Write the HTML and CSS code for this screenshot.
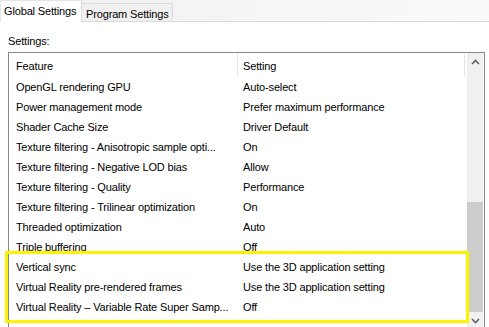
FILE: index.html
```html
<!DOCTYPE html>
<html>
<head>
    <title>Global Settings</title>
    <meta charset="UTF-8">
    <link rel="stylesheet" href="styles.css">
</head>
<body>
    <div class="tabs">
        <div class="tab active">Global Settings</div>
        <div class="tab">Program Settings</div>
        <div class="tab-fill"></div>
    </div>

    <div class="panel">
        <div class="label">Settings:</div>

        <div class="listbox">
            <div class="list">
                <div class="row head">
                    <div class="col feature">Feature</div>
                    <div class="col setting">Setting</div>
                </div>
                <div class="row"><div class="col feature">OpenGL rendering GPU</div><div class="col setting">Auto-select</div></div>
                <div class="row"><div class="col feature">Power management mode</div><div class="col setting">Prefer maximum performance</div></div>
                <div class="row"><div class="col feature">Shader Cache Size</div><div class="col setting">Driver Default</div></div>
                <div class="row"><div class="col feature">Texture filtering - Anisotropic sample opti...</div><div class="col setting">On</div></div>
                <div class="row"><div class="col feature">Texture filtering - Negative LOD bias</div><div class="col setting">Allow</div></div>
                <div class="row"><div class="col feature">Texture filtering - Quality</div><div class="col setting">Performance</div></div>
                <div class="row"><div class="col feature">Texture filtering - Trilinear optimization</div><div class="col setting">On</div></div>
                <div class="row"><div class="col feature">Threaded optimization</div><div class="col setting">Auto</div></div>
                <div class="row"><div class="col feature">Triple buffering</div><div class="col setting">Off</div></div>
                <div class="row"><div class="col feature">Vertical sync</div><div class="col setting">Use the 3D application setting</div></div>
                <div class="row"><div class="col feature">Virtual Reality pre-rendered frames</div><div class="col setting">Use the 3D application setting</div></div>
                <div class="row"><div class="col feature">Virtual Reality – Variable Rate Super Samp...</div><div class="col setting">Off</div></div>
            </div>

            <div class="scrollbar">
                <div class="arrow">
                    <svg width="9" height="6" viewBox="0 0 9 6"><path d="M1 5 L4.5 1.5 L8 5" fill="none" stroke="#606060" stroke-width="1.6"/></svg>
                </div>
                <div class="track">
                    <div class="thumb"></div>
                </div>
                <div class="arrow">
                    <svg width="9" height="6" viewBox="0 0 9 6"><path d="M1 1 L4.5 4.5 L8 1" fill="none" stroke="#606060" stroke-width="1.6"/></svg>
                </div>
            </div>
        </div>

        <!-- marca amarela em volta das opções de sync/VR -->
        <div class="highlight"></div>
    </div>
</body>
</html>
```

FILE: styles.css
```css
body {
    margin: 0;
    font-family: "Liberation Sans", Arial, sans-serif;
    font-size: 11px;
    letter-spacing: -0.15px;
    color: #000;
    background-color: #fff;
    overflow: hidden;
}
.tabs {
    display: flex;
    align-items: flex-end;
    height: 22px;
    background: linear-gradient(to right, #f0f0f0, #fafafa);
}
.tab {
    white-space: nowrap;
    box-sizing: border-box;
}
.tab.active {
    height: 22px;
    line-height: 21px;
    width: 82px;
    padding: 0 3px;
    background-color: #fff;
    border: 1px solid #e4e4e4;
    border-bottom: none;
    border-right-color: #d9d9d9;
}
.tab:not(.active) {
    width: 91px;
    height: 19px;
    line-height: 18px;
    padding: 1px 0 0 4px;
    background-color: #f0f0f0;
    border: 1px solid #d9d9d9;
    border-left: none;
    border-bottom-color: #dadada;
}
.tab-fill {
    flex: 1;
    height: 1px;
    background-color: #dadada;
}
.panel {
    position: relative;
    padding: 11px 0 0 8px;
}
.label {
    height: 19px;
    line-height: 16px;
}
.listbox {
    display: flex;
    width: 477px;
    height: 277px;
    border: 1px solid #828790;
    border-bottom: none;
    box-sizing: border-box;
}
.list {
    flex: 1;
    overflow: hidden;
}
.row {
    display: flex;
    height: 20px;
    line-height: 20px;
}
.row.head {
    height: 24px;
    line-height: 25px;
}
.col {
    white-space: nowrap;
    overflow: hidden;
    box-sizing: border-box;
}
.feature {
    width: 229px;
    padding-left: 7px;
}
.setting {
    flex: 1;
    padding-left: 5px;
}
.row.head .col {
    border-right: 1px solid #e5e5e5;
    height: 23px;
    margin-top: 1px;
}
.row.head .setting {
    margin-right: 2px;
}
.scrollbar {
    width: 16px;
    margin-right: 1px;
    display: flex;
    flex-direction: column;
    background-color: #f0f0f0;
}
.arrow {
    height: 17px;
    display: flex;
    align-items: center;
    justify-content: center;
}
.track {
    flex: 1;
    display: flex;
    flex-direction: column;
    justify-content: flex-end;
}
.thumb {
    height: 110px;
    background-color: #cdcdcd;
}
.highlight {
    position: absolute;
    left: 5px;
    top: 229px;
    width: 464px;
    height: 72px;
    border: 3px solid #fff200;
    box-sizing: border-box;
}
```
